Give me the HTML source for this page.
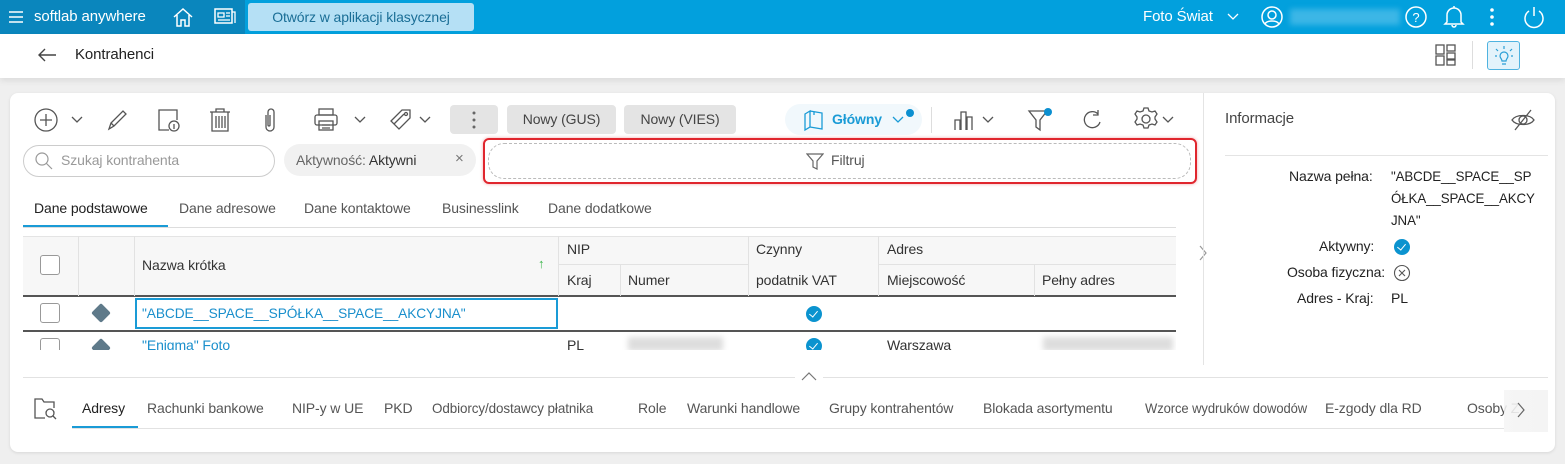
<!DOCTYPE html>
<html><head><meta charset="utf-8"><style>
*{box-sizing:border-box;margin:0;padding:0}
body{width:1565px;height:464px;overflow:hidden;background:#efefef;font-family:"Liberation Sans",Arial,sans-serif;font-size:14px;color:#333;position:relative;letter-spacing:-0.1px}
.a{position:absolute;white-space:nowrap}
.top{position:absolute;left:0;top:0;width:1565px;height:34px;background:#02a0dd}
.topl{position:absolute;left:0;top:0;width:245px;height:34px;background:#0a86bd}
.sub{position:absolute;left:0;top:34px;width:1565px;height:44px;background:#fff;box-shadow:0 3px 6px rgba(0,0,0,.08)}
.card{position:absolute;left:10px;top:93px;width:1545px;height:359px;background:#fff;border-radius:8px;box-shadow:0 1px 3px rgba(0,0,0,.1)}
.ic{stroke:#555;fill:none;stroke-width:1.3}
.btn{position:absolute;background:#e4e4e4;border-radius:4px;color:#444;font-size:14px;text-align:center}
.th{position:absolute;color:#333;font-size:14px;white-space:nowrap}
.cb{position:absolute;width:20px;height:20px;border:1px solid #999;border-radius:3px;background:#fff}
.chk{position:absolute;width:16px;height:16px;border-radius:50%;background:#0b93cf}
.chk:after{content:"";position:absolute;left:5px;top:3px;width:4px;height:7px;border:solid #fff;border-width:0 1.5px 1.5px 0;transform:rotate(40deg)}
.tab{position:absolute;font-size:14px;color:#555;white-space:nowrap;transform-origin:left}
.r{position:absolute;font-size:14px;color:#222;white-space:nowrap;transform:scaleX(.95);transform-origin:left}
</style></head><body>
<div class="top"></div><div class="topl"></div>
<svg class="a" style="left:8px;top:10px" width="16" height="14"><path d="M1 2h14M1 7h14M1 12h14" stroke="#fff" stroke-width="1.6"/></svg>
<div class="a" style="left:34px;top:8px;color:#fff;font-size:15px">softlab anywhere</div>
<svg class="a" style="left:172px;top:6px" width="22" height="22"><path d="M2 11L11 3l9 8M5 9v11h4v-6h4v6h4V9" stroke="#fff" fill="none" stroke-width="1.5"/></svg>
<svg class="a" style="left:214px;top:8px" width="22" height="18"><rect x="1" y="1" width="17" height="14" stroke="#fff" fill="none" stroke-width="1.5"/><path d="M4 5h6v4H4zM12 5h4M12 8h4M4 12h12M18 4h3v11" stroke="#fff" fill="none" stroke-width="1.3"/></svg>
<div class="a" style="left:248px;top:3px;width:226px;height:28px;background:#b5e0f5;border-radius:3px;color:#1a6e96;font-size:14px;line-height:28px;text-align:center">Otwórz w aplikacji klasycznej</div>
<div class="a" style="left:1143px;top:8px;color:#fff;font-size:15px">Foto Świat</div>
<svg class="a" style="left:1227px;top:13px" width="12" height="8"><path d="M1 1l5 5 5-5" stroke="#fff" fill="none" stroke-width="1.3"/></svg>
<svg class="a" style="left:1260px;top:5px" width="24" height="24"><circle cx="12" cy="12" r="10" stroke="#fff" fill="none" stroke-width="1.5"/><circle cx="12" cy="10" r="4" stroke="#fff" fill="none" stroke-width="1.5"/><path d="M5 19c2-4 12-4 14 0" stroke="#fff" fill="none" stroke-width="1.5"/></svg>
<div class="a" style="left:1290px;top:9px;width:110px;height:16px;background:#3cb6e6;filter:blur(3px)"></div>
<svg class="a" style="left:1404px;top:5px" width="24" height="24"><circle cx="12" cy="12" r="10" stroke="#fff" fill="none" stroke-width="1.5"/><text x="12" y="17" fill="#fff" font-size="13" text-anchor="middle" font-family="Liberation Sans">?</text></svg>
<svg class="a" style="left:1443px;top:4px" width="22" height="24"><path d="M4 18V11a7 7 0 0114 0v7l2 2H2zM9 21a2 2 0 004 0M11 2v2" stroke="#fff" fill="none" stroke-width="1.5"/></svg>
<svg class="a" style="left:1489px;top:7px" width="6" height="20"><circle cx="3" cy="3" r="1.8" fill="#fff"/><circle cx="3" cy="10" r="1.8" fill="#fff"/><circle cx="3" cy="17" r="1.8" fill="#fff"/></svg>
<svg class="a" style="left:1522px;top:5px" width="24" height="24"><path d="M7 6a9 9 0 1010 0M12 2v9" stroke="#fff" fill="none" stroke-width="1.5"/></svg>

<div class="sub"></div>
<svg class="a" style="left:37px;top:47px" width="20" height="16"><path d="M19 8H2M8 2L2 8l6 6" stroke="#444" fill="none" stroke-width="1.4"/></svg>
<div class="a" style="left:75px;top:46px;font-size:15px;color:#222">Kontrahenci</div>
<svg class="a" style="left:1435px;top:44px" width="22" height="22"><rect x="1" y="1" width="8" height="9" class="ic"/><rect x="1" y="12" width="8" height="9" class="ic"/><rect x="12" y="1" width="8" height="6" class="ic"/><rect x="12" y="9" width="8" height="6" class="ic"/><rect x="12" y="16" width="8" height="5" class="ic"/></svg>
<div class="a" style="left:1472px;top:41px;width:1px;height:28px;background:#ddd"></div>
<div class="a" style="left:1487px;top:41px;width:33px;height:29px;background:#e3f3fb;border:1px solid #4fb3e0;border-radius:3px"></div>
<svg class="a" style="left:1492px;top:44px" width="24" height="24"><path d="M8 12a4 4 0 118 0c0 2-2 3-2 5h-4c0-2-2-3-2-5zM10 20h4M12 2v3M4 5l2 2M20 5l-2 2M3 12h2M19 12h2" stroke="#2a9fd6" fill="none" stroke-width="1.2"/></svg>

<div class="card"></div>
<svg class="a" style="left:33px;top:107px" width="26" height="26"><circle cx="13" cy="13" r="11" class="ic"/><path d="M13 7v12M7 13h12" class="ic"/></svg>
<svg class="a" style="left:71px;top:116px" width="12" height="8"><path d="M1 1l5 5 5-5" class="ic"/></svg>
<svg class="a" style="left:105px;top:107px" width="26" height="26"><path d="M4 22l2-6L18 4l3 3L9 19zM6 16l3 3" class="ic"/></svg>
<svg class="a" style="left:156px;top:107px" width="26" height="26"><path d="M13 23H3V3h18v10" class="ic"/><circle cx="18" cy="19" r="5" class="ic"/><path d="M18 17v5" class="ic"/></svg>
<svg class="a" style="left:208px;top:107px" width="24" height="26"><path d="M2 5h20M8 5V2h8v3M4 5v19h16V5M8 9v12M11 9v12M14 9v12M17 9v12" class="ic"/></svg>
<svg class="a" style="left:262px;top:107px" width="16" height="26"><path d="M4 8v12a4 4 0 008 0V5a3 3 0 00-6 0v13a1 1 0 002 0V8" class="ic"/></svg>
<svg class="a" style="left:313px;top:107px" width="26" height="26"><rect x="6" y="2" width="14" height="6" class="ic"/><rect x="2" y="8" width="22" height="10" rx="2" class="ic"/><rect x="6" y="14" width="14" height="9" class="ic"/><path d="M9 18h8M9 21h8" class="ic"/></svg>
<svg class="a" style="left:354px;top:116px" width="12" height="8"><path d="M1 1l5 5 5-5" class="ic"/></svg>
<svg class="a" style="left:388px;top:107px" width="28" height="26"><path d="M3 14l11-11h8v8L11 22zM6 17l10-10" class="ic"/><circle cx="18" cy="7" r="1.5" class="ic"/></svg>
<svg class="a" style="left:419px;top:116px" width="12" height="8"><path d="M1 1l5 5 5-5" class="ic"/></svg>
<div class="btn" style="left:450px;top:105px;width:48px;height:29px"></div>
<svg class="a" style="left:472px;top:110px" width="4" height="20"><circle cx="2" cy="3" r="1.5" fill="#666"/><circle cx="2" cy="10" r="1.5" fill="#666"/><circle cx="2" cy="17" r="1.5" fill="#666"/></svg>
<div class="btn" style="left:507px;top:105px;width:109px;height:29px;line-height:29px">Nowy (GUS)</div>
<div class="btn" style="left:624px;top:105px;width:112px;height:29px;line-height:29px">Nowy (VIES)</div>
<div class="a" style="left:785px;top:104px;width:137px;height:31px;background:#f1f8fc;border-radius:16px"></div>
<svg class="a" style="left:802px;top:108px" width="24" height="24"><path d="M3 6l5-3v16l-5 3zM8 3l12 2v16l-12-2M12 4v3" stroke="#1a9bd6" fill="none" stroke-width="1.3"/></svg>
<div class="a" style="left:832px;top:111px;color:#1a9bd6;font-weight:bold;font-size:14px">Główny</div>
<svg class="a" style="left:892px;top:116px" width="12" height="8"><path d="M1 1l5 5 5-5" stroke="#1a9bd6" fill="none" stroke-width="1.3"/></svg>
<div class="a" style="left:906px;top:109px;width:8px;height:8px;border-radius:50%;background:#0b8fd0"></div>
<div class="a" style="left:931px;top:107px;width:1px;height:26px;background:#ddd"></div>
<svg class="a" style="left:953px;top:108px" width="24" height="24"><path d="M2 22V12h5v10M8 22V4h5v18M14 22V9h5v13" class="ic"/></svg>
<svg class="a" style="left:982px;top:116px" width="12" height="8"><path d="M1 1l5 5 5-5" class="ic"/></svg>
<svg class="a" style="left:1027px;top:108px" width="24" height="24"><path d="M2 3h18l-7 9v10l-4-3v-7z" class="ic"/></svg>
<div class="a" style="left:1044px;top:108px;width:8px;height:8px;border-radius:50%;background:#0b8fd0"></div>
<svg class="a" style="left:1081px;top:108px" width="22" height="24"><path d="M17 6A8 8 0 1019 14M17 2v5h-5" class="ic"/></svg>
<svg class="a" style="left:1133px;top:106px" width="26" height="26"><circle cx="13" cy="13" r="4" class="ic"/><path d="M11 2h4l1 3 3 1 3-1 2 3-2 3v2l2 3-2 3-3-1-3 1-1 3h-4l-1-3-3-1-3 1-2-3 2-3v-2L2 8l2-3 3 1 3-1z" class="ic"/></svg>
<svg class="a" style="left:1162px;top:116px" width="12" height="8"><path d="M1 1l5 5 5-5" class="ic"/></svg>

<div class="a" style="left:23px;top:145px;width:252px;height:32px;border:1px solid #ccc;border-radius:16px"></div>
<svg class="a" style="left:34px;top:151px" width="20" height="20"><circle cx="8" cy="8" r="6" stroke="#999" fill="none" stroke-width="1.2"/><path d="M12 12l6 6" stroke="#999" stroke-width="1.2"/></svg>
<div class="a" style="left:61px;top:152px;color:#999;font-size:14px">Szukaj kontrahenta</div>
<div class="a" style="left:284px;top:144px;width:192px;height:32px;background:#f1f1f1;border-radius:16px"></div>
<div class="a" style="left:296px;top:152px;color:#666;font-size:14px">Aktywność: <span style="color:#333">Aktywni</span></div>
<div class="a" style="left:455px;top:150px;color:#777;font-size:15px">×</div>
<div class="a" style="left:483px;top:138px;width:714px;height:46px;border:2px solid #e0262e;border-radius:6px;box-shadow:0 0 3px rgba(224,38,46,.4)"></div>
<div class="a" style="left:488px;top:143px;width:703px;height:36px;border:1px dashed #bbb;border-radius:16px"></div>
<svg class="a" style="left:806px;top:152px" width="18" height="18"><path d="M1 2h16l-6 7v8l-4-2V9z" stroke="#666" fill="none" stroke-width="1.2"/></svg>
<div class="a" style="left:831px;top:152px;color:#555;font-size:14px">Filtruj</div>

<div class="tab" style="left:34px;top:200px;color:#222">Dane podstawowe</div>
<div class="tab" style="left:179px;top:200px">Dane adresowe</div>
<div class="tab" style="left:304px;top:200px">Dane kontaktowe</div>
<div class="tab" style="left:442px;top:200px">Businesslink</div>
<div class="tab" style="left:548px;top:200px">Dane dodatkowe</div>
<div class="a" style="left:23px;top:227px;width:1153px;height:1px;background:#ddd"></div>
<div class="a" style="left:23px;top:225px;width:145px;height:2px;background:#1a9bd6"></div>

<div class="a" style="left:23px;top:236px;width:1153px;height:60px;background:#f7f7f7;border-top:1px solid #e4e4e4"></div>
<div class="a" style="left:23px;top:295px;width:1153px;height:2px;background:#555"></div>
<div class="a" style="left:78px;top:236px;width:1px;height:60px;background:#e2e2e2"></div>
<div class="a" style="left:134px;top:236px;width:1px;height:60px;background:#e2e2e2"></div>
<div class="a" style="left:558px;top:236px;width:1px;height:60px;background:#e2e2e2"></div>
<div class="a" style="left:620px;top:265px;width:1px;height:31px;background:#e2e2e2"></div>
<div class="a" style="left:748px;top:236px;width:1px;height:60px;background:#e2e2e2"></div>
<div class="a" style="left:878px;top:236px;width:1px;height:60px;background:#e2e2e2"></div>
<div class="a" style="left:1034px;top:265px;width:1px;height:31px;background:#e2e2e2"></div>
<div class="a" style="left:558px;top:264px;width:190px;height:1px;background:#e2e2e2"></div>
<div class="a" style="left:878px;top:264px;width:298px;height:1px;background:#e2e2e2"></div>
<div class="cb" style="left:40px;top:255px"></div>
<div class="th" style="left:142px;top:257px">Nazwa krótka</div>
<div class="a" style="left:538px;top:256px;color:#3bb54a;font-size:13px">↑</div>
<div class="th" style="left:567px;top:241px">NIP</div>
<div class="th" style="left:567px;top:272px">Kraj</div>
<div class="th" style="left:628px;top:272px">Numer</div>
<div class="th" style="left:756px;top:241px">Czynny</div>
<div class="th" style="left:756px;top:272px">podatnik VAT</div>
<div class="th" style="left:887px;top:241px">Adres</div>
<div class="th" style="left:887px;top:272px">Miejscowość</div>
<div class="th" style="left:1042px;top:272px">Pełny adres</div>
<svg class="a" style="left:1198px;top:245px" width="10" height="16"><path d="M2 1l6 7-6 7" stroke="#999" fill="none" stroke-width="1.2"/></svg>

<div class="cb" style="left:40px;top:303px"></div>
<div class="a" style="left:94px;top:306px;width:14px;height:14px;background:#5f7a8a;transform:rotate(45deg);border-radius:2px"></div>
<div class="a" style="left:135px;top:298px;width:423px;height:31px;border:2px solid #1a9bd6"></div>
<div class="a" style="left:142px;top:305px;color:#1a8fcc;font-size:14px;transform:scaleX(.98);transform-origin:left">"ABCDE__SPACE__SPÓŁKA__SPACE__AKCYJNA"</div>
<div class="chk" style="left:806px;top:306px"></div>
<div class="a" style="left:23px;top:330px;width:1153px;height:2px;background:#555"></div>
<div class="a" style="left:23px;top:332px;width:1153px;height:18px;overflow:hidden">
<div class="cb" style="left:17px;top:6px"></div>
<div class="a" style="left:71px;top:9px;width:14px;height:14px;background:#5f7a8a;transform:rotate(45deg);border-radius:2px"></div>
<div class="a" style="left:119px;top:5px;color:#1a8fcc;font-size:14px">"Enigma" Foto</div>
<div class="a" style="left:544px;top:5px;font-size:14px">PL</div>
<div class="a" style="left:605px;top:5px;width:95px;height:14px;background:#ddd;filter:blur(3px)"></div>
<div class="chk" style="left:783px;top:6px"></div>
<div class="a" style="left:864px;top:5px;font-size:14px">Warszawa</div>
<div class="a" style="left:1020px;top:5px;width:130px;height:14px;background:#ddd;filter:blur(3px)"></div>
</div>

<div class="a" style="left:1203px;top:93px;width:1px;height:272px;background:#e4e4e4"></div>
<div class="a" style="left:1225px;top:110px;font-size:15px;color:#444">Informacje</div>
<svg class="a" style="left:1510px;top:108px" width="26" height="24"><path d="M2 12c4-6 18-6 22 0-4 6-18 6-22 0z" class="ic"/><circle cx="13" cy="12" r="4" class="ic"/><path d="M5 22L21 2" class="ic"/></svg>
<div class="a" style="left:1225px;top:155px;width:323px;height:1px;background:#e4e4e4"></div>
<div class="a" style="left:1289px;top:168px;font-size:14px;color:#222">Nazwa pełna:</div>
<div class="r" style="left:1391px;top:168px">"ABCDE__SPACE__SP</div>
<div class="r" style="left:1391px;top:190px">ÓŁKA__SPACE__AKCY</div>
<div class="r" style="left:1391px;top:212px">JNA"</div>
<div class="a" style="left:1319px;top:238px;font-size:14px;color:#222">Aktywny:</div>
<div class="chk" style="left:1394px;top:239px"></div>
<div class="a" style="left:1287px;top:264px;font-size:14px;color:#222">Osoba fizyczna:</div>
<svg class="a" style="left:1393px;top:264px" width="18" height="18"><circle cx="9" cy="9" r="7.5" stroke="#555" fill="none" stroke-width="1.1"/><path d="M6 6l6 6M12 6l-6 6" stroke="#555" stroke-width="1.1"/></svg>
<div class="a" style="left:1297px;top:290px;font-size:14px;color:#222">Adres - Kraj:</div>
<div class="a" style="left:1391px;top:290px;font-size:14px;color:#222">PL</div>

<div class="a" style="left:23px;top:377px;width:1525px;height:1px;background:#e2e2e2"></div>
<div class="a" style="left:795px;top:370px;width:28px;height:14px;background:#fff"></div>
<svg class="a" style="left:801px;top:371px" width="16" height="10"><path d="M1 9l7-7 7 7" stroke="#777" fill="none" stroke-width="1.2"/></svg>

<svg class="a" style="left:33px;top:397px" width="26" height="24"><path d="M12 21H2V2h7l2 3h10v6" class="ic"/><circle cx="17" cy="16" r="4" class="ic"/><path d="M20 19l3 3" class="ic"/></svg>
<div class="tab" style="left:82px;top:400px;color:#222">Adresy</div>
<div class="tab" style="left:147px;top:400px">Rachunki bankowe</div>
<div class="tab" style="left:292px;top:400px">NIP-y w UE</div>
<div class="tab" style="left:384px;top:400px">PKD</div>
<div class="tab" style="left:432px;top:400px;transform:scaleX(.96)">Odbiorcy/dostawcy płatnika</div>
<div class="tab" style="left:638px;top:400px">Role</div>
<div class="tab" style="left:687px;top:400px">Warunki handlowe</div>
<div class="tab" style="left:829px;top:400px">Grupy kontrahentów</div>
<div class="tab" style="left:983px;top:400px">Blokada asortymentu</div>
<div class="tab" style="left:1145px;top:400px;transform:scaleX(.93)">Wzorce wydruków dowodów</div>
<div class="tab" style="left:1325px;top:400px">E-zgody dla RD</div>
<div class="tab" style="left:1467px;top:400px">Osoby Z</div>
<div class="a" style="left:1504px;top:390px;width:44px;height:42px;background:linear-gradient(90deg,rgba(244,244,244,.85),#f4f4f4)"></div>
<svg class="a" style="left:1516px;top:402px" width="10" height="16"><path d="M2 1l6 7-6 7" stroke="#666" fill="none" stroke-width="1.2"/></svg>
<div class="a" style="left:72px;top:428px;width:1432px;height:1px;background:#e2e2e2"></div>
<div class="a" style="left:72px;top:426px;width:66px;height:2px;background:#1a9bd6"></div>
</body></html>
